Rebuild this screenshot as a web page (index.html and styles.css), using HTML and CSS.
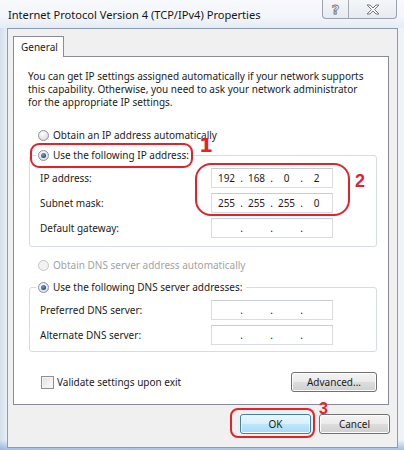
FILE: index.html
```html
<!DOCTYPE html>
<html>
<head>
<meta charset="utf-8">
<link rel="stylesheet" href="styles.css">
</head>
<body>
<div class="window">
  <div class="titlebar">
    <div class="title">Internet Protocol Version 4 (TCP/IPv4) Properties</div>
    <div class="controls">
      <div class="ctl help">?</div>
      <div class="ctl close">
        <svg width="14" height="11" viewBox="0 0 14 11"><path d="M1 1 H4 L7 4 L10 1 H13 L8.5 5.5 L13 10 H10 L7 7 L4 10 H1 L5.5 5.5 Z" fill="#fafafa" stroke="#7a7a7a" stroke-width="1" stroke-linejoin="round"/></svg>
      </div>
    </div>
  </div>
  <div class="client">
    <div class="tabs"><div class="tab">General</div></div>
    <div class="panel">
      <p class="intro">You can get IP settings assigned automatically if your network supports<br>this capability. Otherwise, you need to ask your network administrator<br>for the appropriate IP settings.</p>
      <div class="radio-row"><span class="radio"></span>Obtain an IP address automatically</div>
      <fieldset class="group">
        <legend><span class="radio checked"></span>Use the following IP address:</legend>
        <div class="field-row"><span class="label">IP address:</span><div class="ip"><span>192</span><i>.</i><span>168</span><i>.</i><span>0</span><i>.</i><span>2</span></div></div>
        <div class="field-row"><span class="label">Subnet mask:</span><div class="ip"><span>255</span><i>.</i><span>255</span><i>.</i><span>255</span><i>.</i><span>0</span></div></div>
        <div class="field-row"><span class="label">Default gateway:</span><div class="ip"><span></span><i>.</i><span></span><i>.</i><span></span><i>.</i><span></span></div></div>
      </fieldset>
      <div class="radio-row disabled dns-auto"><span class="radio"></span>Obtain DNS server address automatically</div>
      <fieldset class="group dns">
        <legend><span class="radio checked"></span>Use the following DNS server addresses:</legend>
        <div class="field-row"><span class="label">Preferred DNS server:</span><div class="ip"><span></span><i>.</i><span></span><i>.</i><span></span><i>.</i><span></span></div></div>
        <div class="field-row"><span class="label">Alternate DNS server:</span><div class="ip"><span></span><i>.</i><span></span><i>.</i><span></span><i>.</i><span></span></div></div>
      </fieldset>
      <div class="bottom-row">
        <div class="check"><span class="checkbox"></span>Validate settings upon exit</div>
        <div class="btn adv">Advanced...</div>
      </div>
    </div>
    <div class="buttons">
      <div class="btn ok">OK</div>
      <div class="btn cancel">Cancel</div>
    </div>
  </div>
  <div class="mark mark1"></div>
  <div class="num num1">1</div>
  <div class="mark mark2"></div>
  <div class="num num2">2</div>
  <div class="mark mark3"></div>
  <div class="num num3">3</div>
</div>
</body>
</html>
```
FILE: styles.css
```css
* { box-sizing: border-box; }
body {
  margin: 0;
  width: 404px;
  height: 450px;
  overflow: hidden;
  font-family: "Noto Sans", "Open Sans", sans-serif;
  font-size: 10px;
  color: #1c1c1c;
}
.window {
  position: relative;
  width: 404px;
  height: 450px;
  display: flex;
  flex-direction: column;
  background:
    linear-gradient(180deg, rgba(255,255,255,0) 0, rgba(255,255,255,0) 440px, rgba(80,140,210,0.5) 450px),
    linear-gradient(90deg, #d3dfec 0, #e8eef5 7px, #f4f7fb 40%, #eef3f8 100%);
}
.titlebar {
  height: 28px;
  display: flex;
  align-items: flex-start;
  background: linear-gradient(180deg, #f7f9fc 0, #f3f6fa 60%, #e4ecf5 100%);
}
.title {
  padding: 7px 0 0 8px;
  font-size: 11.1px;
  line-height: 16px;
  color: #151515;
}
.controls {
  margin-left: auto;
  margin-right: 7px;
  display: flex;
  height: 19px;
  border: 1px solid #9aa2ad;
  border-top: none;
  border-radius: 0 0 4px 4px;
  background: linear-gradient(180deg, #f4f6f9, #e7ebf0);
}
.ctl {
  display: flex;
  align-items: center;
  justify-content: center;
}
.help {
  width: 26px;
  border-right: 1px solid #a4abb5;
  font-size: 13px;
  font-weight: bold;
  color: #fafafa;
  -webkit-text-stroke: 0.8px #707070;
  font-family: "DejaVu Sans", sans-serif;
}
.close { width: 47px; }
.client {
  height: 420px;
  margin: 0 6px 0 7px;
  border: 1px solid #8d9cac;
  background: #f0f0f0;
  padding: 7px 7px 0 5px;
  display: flex;
  flex-direction: column;
}
.tabs { display: flex; }
.tab {
  position: relative;
  z-index: 1;
  width: 51px;
  height: 21px;
  margin-bottom: -1px;
  border: 1px solid #898c95;
  border-bottom: none;
  background: #fff;
  padding: 3px 0 0 7px;
  line-height: 14px;
}
.panel {
  margin-right: 1px;
  border: 1px solid #898c95;
  background: #fff;
  padding: 13px 11px 12px 14px;
}
.intro {
  margin: 0;
  line-height: 13px;
  white-space: nowrap;
}
.radio-row {
  height: 20px;
  margin-top: 16px;
  display: flex;
  align-items: center;
  padding-left: 10px;
}
.radio {
  width: 11px;
  height: 11px;
  border-radius: 50%;
  border: 1px solid #8d939b;
  background: radial-gradient(circle at 40% 35%, #ffffff 0, #e6e6e6 55%, #cfd2d6 100%);
  margin-right: 4px;
  flex: none;
  display: inline-flex;
  align-items: center;
  justify-content: center;
}
.radio.checked::after {
  content: "";
  width: 5px;
  height: 5px;
  border-radius: 50%;
  background: radial-gradient(circle at 40% 35%, #6fa3d6 0, #1d4f86 70%, #0f2e52 100%);
}
.radio-row.disabled { color: #a3a3a3; }
.radio-row.disabled .radio { border-color: #c4c6c9; background: #f2f2f2; }
.group {
  margin: 0 0 0 1px;
  width: 348px;
  border: 1px solid #d5dde4;
  border-radius: 3px;
  padding: 3px 0 8px 6px;
}
.group legend {
  padding: 0 4px 0 2px;
  height: 20px;
  display: flex;
  align-items: center;
}
.field-row {
  display: flex;
  align-items: center;
  height: 20px;
  margin-left: 4px;
  margin-bottom: 5px;
}
.field-row:last-child { margin-bottom: 0; }
.label { width: 171px; }
.ip {
  width: 122px;
  height: 20px;
  border: 1px solid #dadce2;
  border-top-color: #c9ccd3;
  background: #fff;
  display: flex;
  align-items: center;
  padding-left: 1px;
}
.ip span {
  width: 27px;
  text-align: center;
}
.ip i {
  font-style: normal;
  width: 3px;
  text-align: center;
}
.dns-auto { margin-top: 8px; }
.group.dns { margin-top: 2px; padding-bottom: 6px; }
.bottom-row {
  margin-top: 20px;
  display: flex;
  align-items: center;
  justify-content: space-between;
}
.check {
  display: flex;
  align-items: center;
  padding-left: 13px;
}
.checkbox {
  width: 13px;
  height: 13px;
  border: 1px solid #8e8f8f;
  background: linear-gradient(135deg, #dcdcdc 0, #f2f2f2 60%, #fbfbfb 100%);
  box-shadow: inset 0 0 0 1px #f4f4f4;
  margin-right: 3px;
}
.btn {
  height: 20px;
  border: 1px solid #707070;
  border-radius: 3px;
  background: linear-gradient(180deg, #f3f3f3 0, #ebebeb 48%, #dddddd 52%, #cfcfcf 100%);
  box-shadow: inset 0 0 0 1px #fcfcfc;
  display: flex;
  align-items: center;
  justify-content: center;
}
.adv { width: 86px; }
.buttons {
  margin-top: 9px;
  display: flex;
  justify-content: flex-end;
  gap: 8px;
}
.ok, .cancel { width: 71px; }
.ok {
  border-color: #3c7fb1;
  background: linear-gradient(180deg, #eaf6fd 0, #d9f0fc 48%, #bee6fd 52%, #a7d9f5 100%);
}
.mark {
  position: absolute;
  border: 2px solid #e2232a;
}
.mark1 { left: 30px; top: 143px; width: 163px; height: 25px; border-radius: 9px; }
.mark2 { left: 195px; top: 163px; width: 155px; height: 53px; border-radius: 16px; }
.mark3 { left: 230px; top: 408px; width: 85px; height: 30px; border-radius: 8px; }
.num {
  position: absolute;
  color: #e2232a;
  font-family: "DejaVu Sans", sans-serif;
  font-weight: bold;
  line-height: 1;
}
.num1 { left: 199px; top: 135px; font-size: 20px; line-height: 20px; }
.num2 { left: 355px; top: 172px; font-size: 18px; font-family: "Liberation Sans", sans-serif; }
.num3 { left: 319px; top: 401px; font-size: 16px; font-family: "Liberation Sans", sans-serif; }
```
